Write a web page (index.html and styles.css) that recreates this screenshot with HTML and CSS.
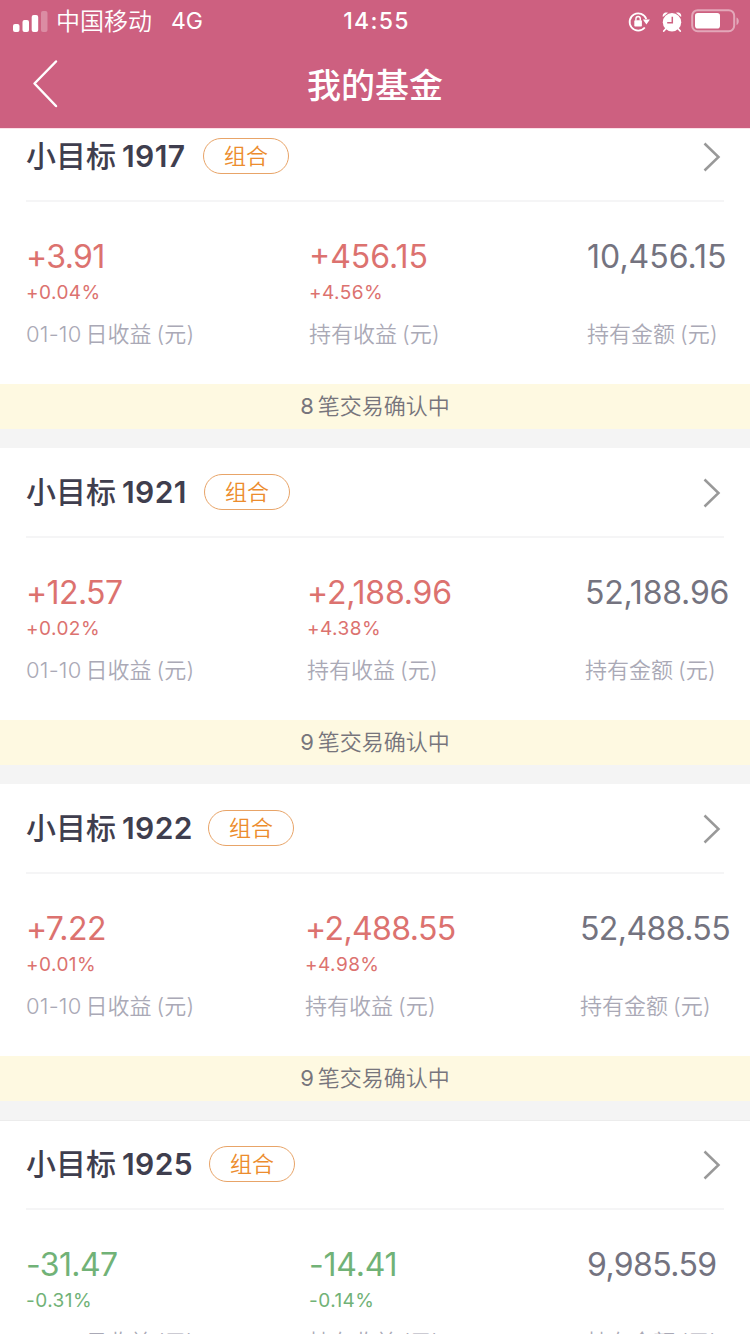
FILE: index.html
```html
<!DOCTYPE html>
<html lang="zh-CN">
<head>
<meta charset="utf-8">
<title>我的基金</title>
<link rel="stylesheet" href="styles.css">
</head>
<body>
<header class="header">
  <div class="status">
    <div class="status-left">
      <svg class="signal" width="35" height="22" viewBox="0 0 35 22" fill="#fff"><rect x="0" y="13" width="6.5" height="8" rx="2"/><rect x="9.5" y="9" width="6.5" height="12" rx="2"/><rect x="18.7" y="4" width="6.5" height="17" rx="2"/><rect x="28" y="0" width="6.5" height="21" rx="2" opacity=".28"/></svg>
      <span class="carrier">中国移动</span><span class="network">4G</span>
    </div>
    <time class="clock">14:55</time>
    <div class="status-right">
      <svg width="22" height="22" viewBox="0 0 22 22"><path d="M16.800 16.500A8.600 8.600 0 1 1 18.300 8" fill="none" stroke="#fff" stroke-width="1.800"/><path d="M14.900 8.600h7l-3.500 4.800z" fill="#fff"/><rect x="6.300" y="9.200" width="7.600" height="6.300" rx=".8" fill="#fff"/><path d="M7.900 9.600V7.700a2.200 2.200 0 0 1 4.400 0v1.900" fill="none" stroke="#fff" stroke-width="1.400"/></svg>
      <svg width="20" height="22" viewBox="0 0 20 22"><path d="M4 17.500 1.800 20M16 17.500l2.200 2.500" stroke="#fff" stroke-width="1.800" stroke-linecap="round"/><circle cx="10" cy="11.200" r="9.200" fill="#fff"/><path d="M.9 6C0 2.800 2.800.5 6 1.700ZM19.100 6C20 2.800 17.200.5 14 1.700Z" fill="#fff"/><path d="M10.300 5.800v6H5.200" fill="none" stroke="#cd6080" stroke-width="1.500"/></svg>
      <svg class="battery" width="49" height="24" viewBox="0 0 49 24"><rect x="1.200" y="1.200" width="42" height="21" rx="5.500" fill="none" stroke="#fff" stroke-opacity=".45" stroke-width="2"/><rect x="4" y="4" width="25" height="15.500" rx="2.800" fill="#fff"/><path d="M45.500 8.500c3 1 3 6.500 0 7.500z" fill="#fff" opacity=".45"/></svg>
    </div>
  </div>
  <div class="navbar">
    <svg class="back" width="28" height="50" viewBox="0 0 28 50"><path d="M25 2.500 3.500 24.500 25 47" fill="none" stroke="#fff" stroke-width="2.500" stroke-linecap="round" stroke-linejoin="round"/></svg>
    <h1 class="title">我的基金</h1>
  </div>
</header>
<main class="list">
  <section class="card cols-a">
    <div class="card-head"><h2 class="name">小目标<span class="code code-1917">1917</span></h2><span class="tag">组合</span><svg class="arrow" width="18" height="30" viewBox="0 0 18 30"><path d="M1.500 1.500 15.500 15 1.500 28.500" /></svg></div>
    <div class="stats">
      <div class="stat up"><div class="value tight">+3.91</div><div class="rate">+0.04%</div><div class="label"><span class="date">01-10</span>日收益<span class="unit">(元)</span></div></div>
      <div class="stat up"><div class="value">+456.15</div><div class="rate">+4.56%</div><div class="label">持有收益<span class="unit">(元)</span></div></div>
      <div class="stat"><div class="value">10,456.15</div><div class="rate"></div><div class="label">持有金额<span class="unit">(元)</span></div></div>
    </div>
    <div class="notice"><span class="count">8</span>笔交易确认中</div>
  </section>
  <section class="card cols-b">
    <div class="card-head"><h2 class="name">小目标<span class="code code-1921">1921</span></h2><span class="tag">组合</span><svg class="arrow" width="18" height="30" viewBox="0 0 18 30"><path d="M1.500 1.500 15.500 15 1.500 28.500" /></svg></div>
    <div class="stats">
      <div class="stat up"><div class="value tight">+12.57</div><div class="rate">+0.02%</div><div class="label"><span class="date">01-10</span>日收益<span class="unit">(元)</span></div></div>
      <div class="stat up"><div class="value snug">+2,188.96</div><div class="rate">+4.38%</div><div class="label">持有收益<span class="unit">(元)</span></div></div>
      <div class="stat"><div class="value snug">52,188.96</div><div class="rate"></div><div class="label">持有金额<span class="unit">(元)</span></div></div>
    </div>
    <div class="notice"><span class="count">9</span>笔交易确认中</div>
  </section>
  <section class="card cols-c">
    <div class="card-head"><h2 class="name">小目标<span class="code code-1922">1922</span></h2><span class="tag">组合</span><svg class="arrow" width="18" height="30" viewBox="0 0 18 30"><path d="M1.500 1.500 15.500 15 1.500 28.500" /></svg></div>
    <div class="stats">
      <div class="stat up"><div class="value tight">+7.22</div><div class="rate">+0.01%</div><div class="label"><span class="date">01-10</span>日收益<span class="unit">(元)</span></div></div>
      <div class="stat up"><div class="value tight">+2,488.55</div><div class="rate">+4.98%</div><div class="label">持有收益<span class="unit">(元)</span></div></div>
      <div class="stat"><div class="value tight">52,488.55</div><div class="rate"></div><div class="label">持有金额<span class="unit">(元)</span></div></div>
    </div>
    <div class="notice"><span class="count">9</span>笔交易确认中</div>
  </section>
  <section class="card cols-a">
    <div class="card-head"><h2 class="name">小目标<span class="code code-1925">1925</span></h2><span class="tag">组合</span><svg class="arrow" width="18" height="30" viewBox="0 0 18 30"><path d="M1.500 1.500 15.500 15 1.500 28.500" /></svg></div>
    <div class="stats">
      <div class="stat down"><div class="value tight">-31.47</div><div class="rate">-0.31%</div><div class="label"><span class="date">01-10</span>日收益<span class="unit">(元)</span></div></div>
      <div class="stat down"><div class="value snug">-14.41</div><div class="rate">-0.14%</div><div class="label">持有收益<span class="unit">(元)</span></div></div>
      <div class="stat"><div class="value tight">9,985.59</div><div class="rate"></div><div class="label">持有金额<span class="unit">(元)</span></div></div>
    </div>
  </section>
</main>
</body>
</html>
```
FILE: styles.css
```css
* { box-sizing: border-box; }
body {
  margin: 0;
  width: 750px;
  height: 1334px;
  overflow: hidden;
  display: flex;
  flex-direction: column;
  background: #f4f4f4;
  font-family: Inter, "Noto Sans CJK SC", sans-serif;
  font-weight: 400;
}
svg { display: block; flex: none; }
.header {
  position: relative;
  flex: none;
  height: 128px;
  background: #cd6080;
  box-shadow: 0 1px #fde0e8;
  color: #fff;
}
.status {
  display: grid;
  grid-template-columns: 1fr auto 1fr;
  align-items: center;
  height: 40px;
  padding: 3px 10px 0 13px;
}
.status-left, .status-right { display: flex; align-items: center; }
.signal { margin-top: -1px; }
.carrier { margin-left: 8px; font-size: 24px; font-weight: 350; line-height: 38px; white-space: nowrap; }
.network { margin-left: 19px; margin-top: -2px; font-size: 23px; line-height: 38px; }
.clock { font-size: 23px; font-weight: 500; letter-spacing: 1.3px; line-height: 37px; margin-top: -1px; }
.status-right { justify-content: flex-end; gap: 12px; }
.battery { margin-left: -3px; margin-top: -3px; }
.navbar {
  display: grid;
  grid-template-columns: 1fr auto 1fr;
  align-items: center;
  height: 88px;
}
.back { margin: -1px 0 0 31px; }
.title { margin: 0; padding-top: 3px; font-size: 34px; font-weight: 500; line-height: 85px; }
/* The list is scrolled so the first card starts 16px above the visible area. */
.list { flex: 1; min-height: 0; overflow: hidden; background: #f4f4f4; }
.card { height: 336px; background: #f4f4f4; }
.card:first-child { margin-top: -16px; }
.card-head {
  display: flex;
  align-items: center;
  height: 88px;
  padding: 0 29px 0 26px;
  background: #fff;
}
.card:last-child .card-head { box-shadow: inset 0 1px #ececec; }
.name { margin: 0; padding-top: 1px; color: #3f3e4e; font-size: 30px; font-weight: 500; line-height: 43px; white-space: nowrap; }
.code { display: inline-block; margin-left: 6px; font-size: 30px; font-weight: 600; letter-spacing: .4px; }
.code-1917 { width: 66px; }
.code-1921 { width: 67px; }
.code-1922 { width: 71px; }
.code-1925 { width: 72px; }
.tag {
  margin-left: 15px;
  width: 86px;
  height: 36px;
  border: 1px solid #e8a468;
  border-radius: 18px;
  color: #ec8c2d;
  font-size: 22px;
  font-weight: 350;
  line-height: 34px;
  text-align: center;
}
.arrow { margin-top: 1px; margin-left: auto; fill: none; stroke: #999; stroke-width: 2.5; }
.stats {
  display: grid;
  height: 184px;
  padding: 37px 0 0 26px;
  background: linear-gradient(#f5f5f6, #f5f5f6) 26px 0 / 698px 2px no-repeat #fff;
}
.cols-a .stats { grid-template-columns: 283px 278px 1fr; }
.cols-b .stats { grid-template-columns: 281px 278px 1fr; }
.cols-c .stats { grid-template-columns: 279px 275px 1fr; }
.stat { color: #74737f; white-space: nowrap; }
.up { color: #dc726f; }
.down { color: #71b277; }
.value { font-size: 32px; line-height: 40px; }
.tight { letter-spacing: -.6px; }
.snug { letter-spacing: -.2px; }
.rate { height: 24px; margin-top: 4px; font-size: 19px; line-height: 24px; letter-spacing: .45px; }
.label { margin-top: 14px; color: #aaa9b6; font-size: 22px; font-weight: 350; line-height: 30px; }
.unit { margin-left: 5px; letter-spacing: .2px; }
.date { margin-right: 4px; letter-spacing: .2px; }
.notice {
  height: 45px;
  background: #fef9e1;
  color: #77757c;
  font-size: 22px;
  font-weight: 350;
  line-height: 44px;
  text-align: center;
}
.count { margin-right: 4px; font-weight: 400; }
```
